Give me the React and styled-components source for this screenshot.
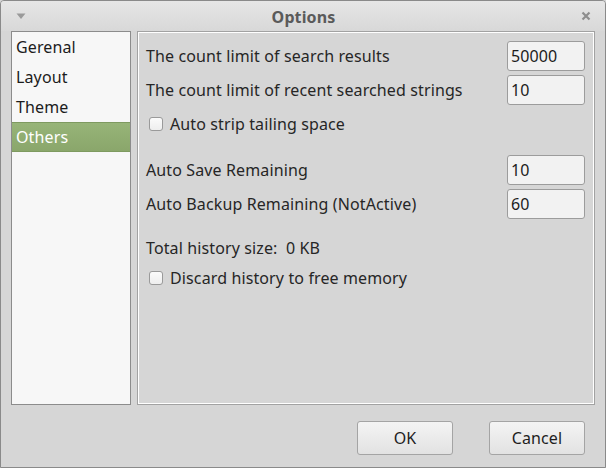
import styled, { createGlobalStyle } from "styled-components";

const GlobalStyle = createGlobalStyle`
  html, body {
    margin: 0;
    padding: 0;
    background: #d6d6d6;
  }
  body {
    font-family: "Noto Sans", "DejaVu Sans", sans-serif;
    letter-spacing: 0.12px;
  }
`;

const Window = styled.div`
  width: 606px;
  height: 468px;
  box-sizing: border-box;
  border: 1px solid #8a8a8a;
  border-radius: 4px 4px 0 0;
  background: #d6d6d6;
  display: flex;
  flex-direction: column;
  overflow: hidden;
`;

const TitleBar = styled.div`
  height: 30px;
  flex-shrink: 0;
  display: flex;
  align-items: center;
  justify-content: space-between;
  padding: 0 13px 0 14px;
  background: linear-gradient(#e6e6e6, #d8d8d8);
`;

const Title = styled.div`
  font-size: 16px;
  font-weight: bold;
  color: #5a5a5a;
  margin-top: 1px;
`;

const Body = styled.div`
  flex: 1;
  display: flex;
  gap: 6px;
  padding: 0 10px;
`;

const Sidebar = styled.div`
  width: 120px;
  height: 374px;
  box-sizing: border-box;
  border: 1px solid #8c8c8c;
  background: #f7f7f7;
  display: flex;
  flex-direction: column;
`;

const NavItem = styled.div`
  height: 30px;
  display: flex;
  align-items: center;
  padding-left: 4px;
  font-size: 16px;
  color: ${(p) => (p.$active ? "#ffffff" : "#1c1c1c")};
  background: ${(p) =>
    p.$active ? "linear-gradient(#97b478, #8aa66b)" : "transparent"};
  border-top: ${(p) => (p.$active ? "1px solid #7e9a60" : "none")};
  border-bottom: ${(p) => (p.$active ? "1px solid #7e9a60" : "none")};
  box-sizing: border-box;
`;

const Panel = styled.div`
  width: 458px;
  height: 374px;
  box-sizing: border-box;
  border: 1px solid #a2a2a2;
  box-shadow: inset 0 0 0 1px #ffffff;
  padding: 9px 9px 0 8px;
  display: flex;
  flex-direction: column;
`;

const Row = styled.div`
  display: flex;
  align-items: center;
  justify-content: space-between;
  height: 30px;
  margin-bottom: 4px;
  margin-top: ${(p) => p.$mt || 0}px;
`;

const Label = styled.span`
  font-size: 16px;
  color: #262626;
`;

const Input = styled.div`
  width: 78px;
  height: 30px;
  box-sizing: border-box;
  border: 1px solid #9c9c9c;
  border-radius: 3px;
  background: #f2f2f2;
  display: flex;
  align-items: center;
  padding-left: 3px;
  font-size: 16px;
  color: #1c1c1c;
`;

const CheckRow = styled.label`
  display: flex;
  align-items: center;
  gap: 7px;
  height: 30px;
  padding-left: 3px;
  font-size: 16px;
  color: #262626;
  margin-top: ${(p) => p.$mt || 0}px;
`;

const Box = styled.span`
  width: 14px;
  height: 14px;
  box-sizing: border-box;
  border: 1px solid #9a9a9a;
  border-radius: 3px;
  background: linear-gradient(#fbfbfb, #eeeeee);
`;

const InfoRow = styled.div`
  height: 26px;
  display: flex;
  align-items: center;
  font-size: 16px;
  color: #262626;
  margin-top: ${(p) => p.$mt || 0}px;
  white-space: pre;
`;

const Footer = styled.div`
  height: 62px;
  display: flex;
  justify-content: flex-end;
  align-items: center;
  gap: 36px;
  padding: 4px 20px 0 0;
  box-sizing: border-box;
`;

const Button = styled.div`
  width: 96px;
  height: 34px;
  box-sizing: border-box;
  border: 1px solid #a4a4a4;
  border-radius: 3px;
  background: linear-gradient(#f4f4f4, #e2e2e2);
  display: flex;
  align-items: center;
  justify-content: center;
  font-size: 16px;
  color: #1e1e1e;
`;

const Glyph = styled.svg`
  display: block;
`;

export default function App() {
  return (
    <>
      <GlobalStyle />
      <Window>
        <TitleBar>
          <Glyph width="12" height="12" viewBox="0 0 12 12">
            <path d="M1.5 3.5 L10.5 3.5 L6 9 Z" fill="#9a9a9a" />
          </Glyph>
          <Title>Options</Title>
          <Glyph width="12" height="12" viewBox="0 0 12 12">
            <path
              d="M2.5 2.5 L9.5 9.5 M9.5 2.5 L2.5 9.5"
              stroke="#8e8e8e"
              strokeWidth="2.2"
            />
          </Glyph>
        </TitleBar>
        <Body>
          <Sidebar>
            <NavItem>Gerenal</NavItem>
            <NavItem>Layout</NavItem>
            <NavItem>Theme</NavItem>
            <NavItem $active>Others</NavItem>
          </Sidebar>
          <Panel>
            <Row>
              <Label>The count limit of search results</Label>
              <Input>50000</Input>
            </Row>
            <Row>
              <Label>The count limit of recent searched strings</Label>
              <Input>10</Input>
            </Row>
            <CheckRow>
              <Box />
              Auto strip tailing space
            </CheckRow>
            <Row $mt={16}>
              <Label>Auto Save Remaining</Label>
              <Input>10</Input>
            </Row>
            <Row>
              <Label>Auto Backup Remaining (NotActive)</Label>
              <Input>60</Input>
            </Row>
            <InfoRow $mt={12}>Total history size:  0 KB</InfoRow>
            <CheckRow $mt={2}>
              <Box />
              Discard history to free memory
            </CheckRow>
          </Panel>
        </Body>
        <Footer>
          <Button>OK</Button>
          <Button>Cancel</Button>
        </Footer>
      </Window>
    </>
  );
}
